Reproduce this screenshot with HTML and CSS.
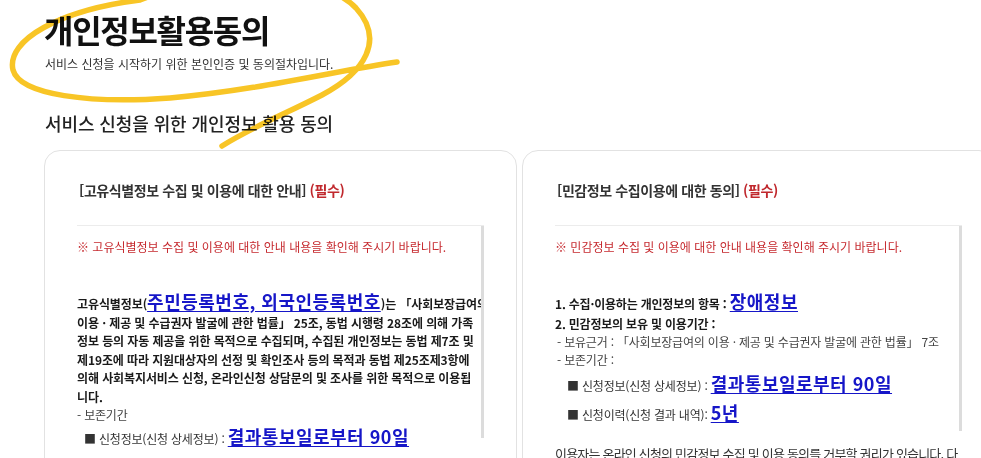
FILE: index.html
```html
<!DOCTYPE html>
<html lang="ko">
<head>
<meta charset="utf-8">
<title>개인정보활용동의</title>
<link rel="stylesheet" href="styles.css">
</head>
<body>
<div class="page">
  <header class="page-head">
    <h1 class="title">개인정보활용동의</h1>
    <p class="subtitle">서비스 신청을 시작하기 위한 본인인증 및 동의절차입니다.</p>
  </header>
  <h2 class="section-title">서비스 신청을 위한 개인정보 활용 동의</h2>
  <div class="cards">
    <section class="card">
      <h3 class="card-title">[고유식별정보 수집 및 이용에 대한 안내] <span class="req">(필수)</span></h3>
      <div class="box">
        <p class="notice">※ 고유식별정보 수집 및 이용에 대한 안내 내용을 확인해 주시기 바랍니다.</p>
        <p class="para">고유식별정보(<a class="hl">주민등록번호, 외국인등록번호</a>)는 「사회보장급여의<br>이용 · 제공 및 수급권자 발굴에 관한 법률」 25조, 동법 시행령 28조에 의해 가족<br>정보 등의 자동 제공을 위한 목적으로 수집되며, 수집된 개인정보는 동법 제7조 및<br>제19조에 따라 지원대상자의 선정 및 확인조사 등의 목적과 동법 제25조제3항에<br>의해 사회복지서비스 신청, 온라인신청 상담문의 및 조사를 위한 목적으로 이용됩<br>니다.</p>
        <p class="line">- 보존기간</p>
        <p class="item item-left">■ 신청정보(신청 상세정보) : <a class="hl">결과통보일로부터 90일</a></p>
        <span class="thumb thumb-left"></span>
      </div>
    </section>
    <section class="card">
      <h3 class="card-title">[민감정보 수집이용에 대한 동의] <span class="req">(필수)</span></h3>
      <div class="box">
        <p class="notice">※ 민감정보 수집 및 이용에 대한 안내 내용을 확인해 주시기 바랍니다.</p>
        <p class="strong first">1. 수집·이용하는 개인정보의 항목 : <a class="hl">장애정보</a></p>
        <p class="strong">2. 민감정보의 보유 및 이용기간 :</p>
        <p class="line sub">- 보유근거 : 「사회보장급여의 이용 · 제공 및 수급권자 발굴에 관한 법률」 7조</p>
        <p class="line sub">- 보존기간 :</p>
        <p class="item">■ 신청정보(신청 상세정보) : <a class="hl">결과통보일로부터 90일</a></p>
        <p class="item">■ 신청이력(신청 결과 내역): <a class="hl">5년</a></p>
        <p class="outro">이용자는 온라인 신청의 민감정보 수집 및 이용 동의를 거부할 권리가 있습니다. 다만, 동의를 거부하실 경우 서비스 신청이 제한될 수 있습니다.</p>
        <span class="thumb thumb-right"></span>
      </div>
    </section>
  </div>
  <svg class="scribble" width="420" height="160" viewBox="0 0 420 160" aria-hidden="true">
    <path d="M397 62 C340 70 260 90 170 98 C90 104 20 95 13 70 C6 40 60 10 140 0 C210 -28 320 -30 356 8 C385 40 365 72 322 95 C285 114 250 128 222 146" fill="none" stroke="#f8c526" stroke-width="5.5" stroke-linecap="round"/>
  </svg>
</div>
</body>
</html>
```
FILE: styles.css
```css
html, body {
  margin: 0;
  padding: 0;
  overflow: hidden;
  background: #fff;
}
body {
  font-family: "Noto Sans CJK KR", "Noto Sans", sans-serif;
  color: #222;
}
.page {
  position: relative;
  padding: 9px 0 0 44px;
  width: 1100px;
}
.title {
  margin: 0;
  font-size: 32px;
  line-height: 40px;
  font-weight: 700;
  letter-spacing: -1.3px;
  color: #111;
}
.subtitle {
  margin: 6px 0 0 1px;
  font-size: 12px;
  line-height: 18px;
  letter-spacing: 0;
  color: #333;
}
.section-title {
  margin: 37px 0 0 1px;
  font-size: 18px;
  line-height: 26px;
  font-weight: 500;
  letter-spacing: -0.1px;
  color: #222;
}
.cards {
  display: flex;
  gap: 5px;
  margin-top: 14px;
}
.card {
  flex: 0 0 auto;
  box-sizing: border-box;
  width: 473px;
  height: 340px;
  border: 1px solid #e2e2e2;
  border-radius: 16px;
  padding: 29px 32px 0 32px;
}
.card-title {
  margin: 0 0 0 2px;
  font-size: 14px;
  line-height: 20px;
  font-weight: 700;
  letter-spacing: -0.4px;
  color: #333;
}
.req {
  color: #c0282d;
  font-weight: 700;
}
.box {
  position: relative;
  margin-top: 25px;
  height: 260px;
  border-top: 1px solid #ececec;
  overflow: hidden;
  font-size: 12px;
  line-height: 18px;
  letter-spacing: -0.2px;
  color: #333;
}
.box p {
  margin: 0;
  white-space: nowrap;
}
.notice {
  padding-top: 12px;
  margin-bottom: 34px !important;
  color: #c62a2f;
  letter-spacing: 0;
}
.para, .strong {
  font-weight: 700;
  color: #1a1a1a;
}
.para {
  line-height: 18.5px;
  letter-spacing: -0.1px;
}
.hl {
  font-size: 18px;
  line-height: 22px;
  font-weight: 700;
  letter-spacing: 0.5px;
  color: #1616c8;
  text-decoration: underline;
  text-underline-offset: 2px;
}
.line {
  color: #444;
}
.sub {
  padding-left: 2px;
}
.item {
  padding-left: 12px;
  margin: 3px 0 4px !important;
  line-height: 22px;
  color: #333;
}
.item-left {
  padding-left: 7px;
  margin-top: 1px !important;
}
.strong.first {
  line-height: 22px;
}
.outro {
  white-space: normal !important;
  margin-top: 18px !important;
  font-size: 13px;
  line-height: 20px;
  letter-spacing: -0.8px;
  color: #333;
}
.thumb {
  position: absolute;
  top: 0;
  right: 0;
  width: 3px;
  background: #dcdcdc;
}
.thumb-left {
  height: 212px;
}
.thumb-right {
  height: 205px;
}
.scribble {
  position: absolute;
  left: 0;
  top: 0;
  mix-blend-mode: multiply;
  pointer-events: none;
}
```
